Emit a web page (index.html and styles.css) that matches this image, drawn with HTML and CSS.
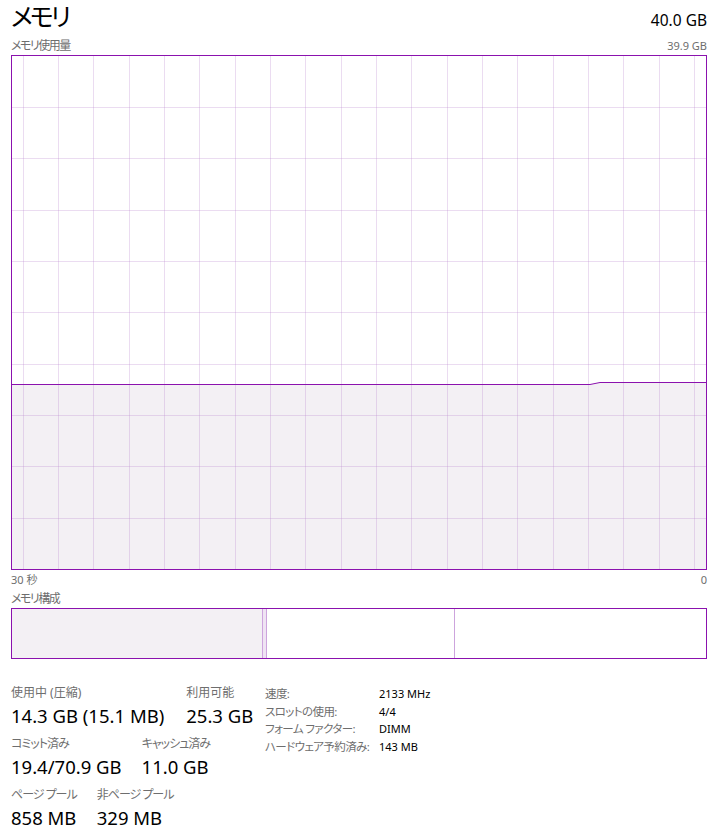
FILE: index.html
```html
<!DOCTYPE html>
<html lang="ja">
<head>
<meta charset="utf-8">
<title>メモリ</title>
<link rel="stylesheet" href="styles.css">
</head>
<body>
<div class="page">
  <header class="head">
    <h1 class="title">メモリ</h1>
    <div class="total">40.0 GB</div>
  </header>
  <div class="axis axis-top"><span>メモリ使用量</span><span>39.9 GB</span></div>
  <div class="graph">
    <svg class="chart" width="694" height="513" viewBox="0 0 694 513">
      <polygon class="area" points="0,328.5 578,328.5 588,326.5 694,326.5 694,513 0,513"/>
      <g class="grid">
        <line x1="11.5" y1="0" x2="11.5" y2="513"/>
        <line x1="46.5" y1="0" x2="46.5" y2="513"/>
        <line x1="81.5" y1="0" x2="81.5" y2="513"/>
        <line x1="117.5" y1="0" x2="117.5" y2="513"/>
        <line x1="152.5" y1="0" x2="152.5" y2="513"/>
        <line x1="187.5" y1="0" x2="187.5" y2="513"/>
        <line x1="223.5" y1="0" x2="223.5" y2="513"/>
        <line x1="258.5" y1="0" x2="258.5" y2="513"/>
        <line x1="293.5" y1="0" x2="293.5" y2="513"/>
        <line x1="329.5" y1="0" x2="329.5" y2="513"/>
        <line x1="364.5" y1="0" x2="364.5" y2="513"/>
        <line x1="399.5" y1="0" x2="399.5" y2="513"/>
        <line x1="435.5" y1="0" x2="435.5" y2="513"/>
        <line x1="470.5" y1="0" x2="470.5" y2="513"/>
        <line x1="505.5" y1="0" x2="505.5" y2="513"/>
        <line x1="541.5" y1="0" x2="541.5" y2="513"/>
        <line x1="576.5" y1="0" x2="576.5" y2="513"/>
        <line x1="611.5" y1="0" x2="611.5" y2="513"/>
        <line x1="647.5" y1="0" x2="647.5" y2="513"/>
        <line x1="682.5" y1="0" x2="682.5" y2="513"/>
        <line x1="0" y1="51.5" x2="694" y2="51.5"/>
        <line x1="0" y1="102.5" x2="694" y2="102.5"/>
        <line x1="0" y1="154.5" x2="694" y2="154.5"/>
        <line x1="0" y1="205.5" x2="694" y2="205.5"/>
        <line x1="0" y1="256.5" x2="694" y2="256.5"/>
        <line x1="0" y1="308.5" x2="694" y2="308.5"/>
        <line x1="0" y1="359.5" x2="694" y2="359.5"/>
        <line x1="0" y1="410.5" x2="694" y2="410.5"/>
        <line x1="0" y1="462.5" x2="694" y2="462.5"/>
      </g>
      <polyline class="usage" points="0,328.5 578,328.5 588,326.5 694,326.5"/>
    </svg>
  </div>
  <div class="axis axis-bottom"><span>30 秒</span><span>0</span></div>
  <div class="axis comp-label"><span>メモリ構成</span></div>
  <div class="comp">
    <div class="seg inuse"></div>
    <div class="seg modified"></div>
    <div class="seg standby"></div>
    <div class="seg free"></div>
  </div>
  <section class="stats">
    <div class="stats-left">
      <div class="stat-row">
        <div class="stat"><div class="lbl">使用中 (圧縮)</div><div class="val">14.3 GB (15.1 MB)</div></div>
        <div class="stat"><div class="lbl">利用可能</div><div class="val">25.3 GB</div></div>
      </div>
      <div class="stat-row">
        <div class="stat"><div class="lbl kana">コミット済み</div><div class="val">19.4/70.9 GB</div></div>
        <div class="stat"><div class="lbl kana">キャッシュ済み</div><div class="val">11.0 GB</div></div>
      </div>
      <div class="stat-row">
        <div class="stat"><div class="lbl kana">ページ プール</div><div class="val">858 MB</div></div>
        <div class="stat"><div class="lbl kana">非ページ プール</div><div class="val">329 MB</div></div>
      </div>
    </div>
    <dl class="specs">
      <dt>速度:</dt><dd>2133 MHz</dd>
      <dt>スロットの使用:</dt><dd>4/4</dd>
      <dt>フォーム ファクター:</dt><dd>DIMM</dd>
      <dt>ハードウェア予約済み:</dt><dd>143 MB</dd>
    </dl>
  </section>
</div>
</body>
</html>
```

FILE: styles.css
```css
html, body {
  margin: 0;
  padding: 0;
  background: #ffffff;
}
body {
  font-family: "Noto Sans", "Noto Sans CJK JP", sans-serif;
  font-feature-settings: "palt";
  color: #000;
}
.page {
  width: 696px;
  padding: 0 13px 0 11px;
}
.head {
  display: flex;
  justify-content: space-between;
  align-items: baseline;
  height: 36px;
}
.title {
  margin: 0;
  font-weight: 400;
  font-size: 25px;
  line-height: 32px;
  letter-spacing: -3px;
}
.total {
  font-size: 15.5px;
  line-height: 20px;
}
.axis {
  display: flex;
  justify-content: space-between;
  font-size: 11px;
  line-height: 19px;
  color: #6e6e6e;
}
.axis-top span:first-child,
.comp-label span {
  font-size: 12px;
  letter-spacing: -1.5px;
}
.graph {
  border: 1px solid #8b12ae;
  width: 694px;
  height: 513px;
}
.chart {
  display: block;
}
.area {
  fill: #f3f0f4;
}
.grid line {
  stroke: rgba(190, 140, 210, 0.3);
  stroke-width: 1;
}
.usage {
  fill: none;
  stroke: #8b12ae;
  stroke-width: 1;
}
.comp {
  display: flex;
  border: 1px solid #8b12ae;
  height: 49px;
}
.seg {
  border-right: 1px solid #cda4dd;
}
.inuse {
  width: 250px;
  background: #f3f0f4;
}
.modified {
  width: 3px;
  background: #efe4f3;
}
.standby {
  width: 187px;
}
.free {
  flex: 1;
  border-right: 0;
}
.stats {
  display: flex;
  align-items: flex-start;
  margin-top: 25px;
}
.stats-left {
  width: 254px;
}
.stat-row {
  display: flex;
  gap: 20px;
  margin-bottom: 5px;
}
.stat-row:first-child {
  gap: 22px;
}
.lbl {
  font-size: 12px;
  line-height: 18px;
  color: #6e6e6e;
  white-space: nowrap;
}
.kana {
  letter-spacing: -1px;
}
.val {
  font-size: 18.5px;
  line-height: 28px;
  white-space: nowrap;
}
.specs {
  display: grid;
  grid-template-columns: 114px auto;
  margin: 1px 0 0;
  font-size: 11px;
  line-height: 17.7px;
}
.specs dt {
  color: #6e6e6e;
  font-size: 11.5px;
  letter-spacing: -0.6px;
  white-space: nowrap;
}
.specs dd {
  margin: 0;
}
```
